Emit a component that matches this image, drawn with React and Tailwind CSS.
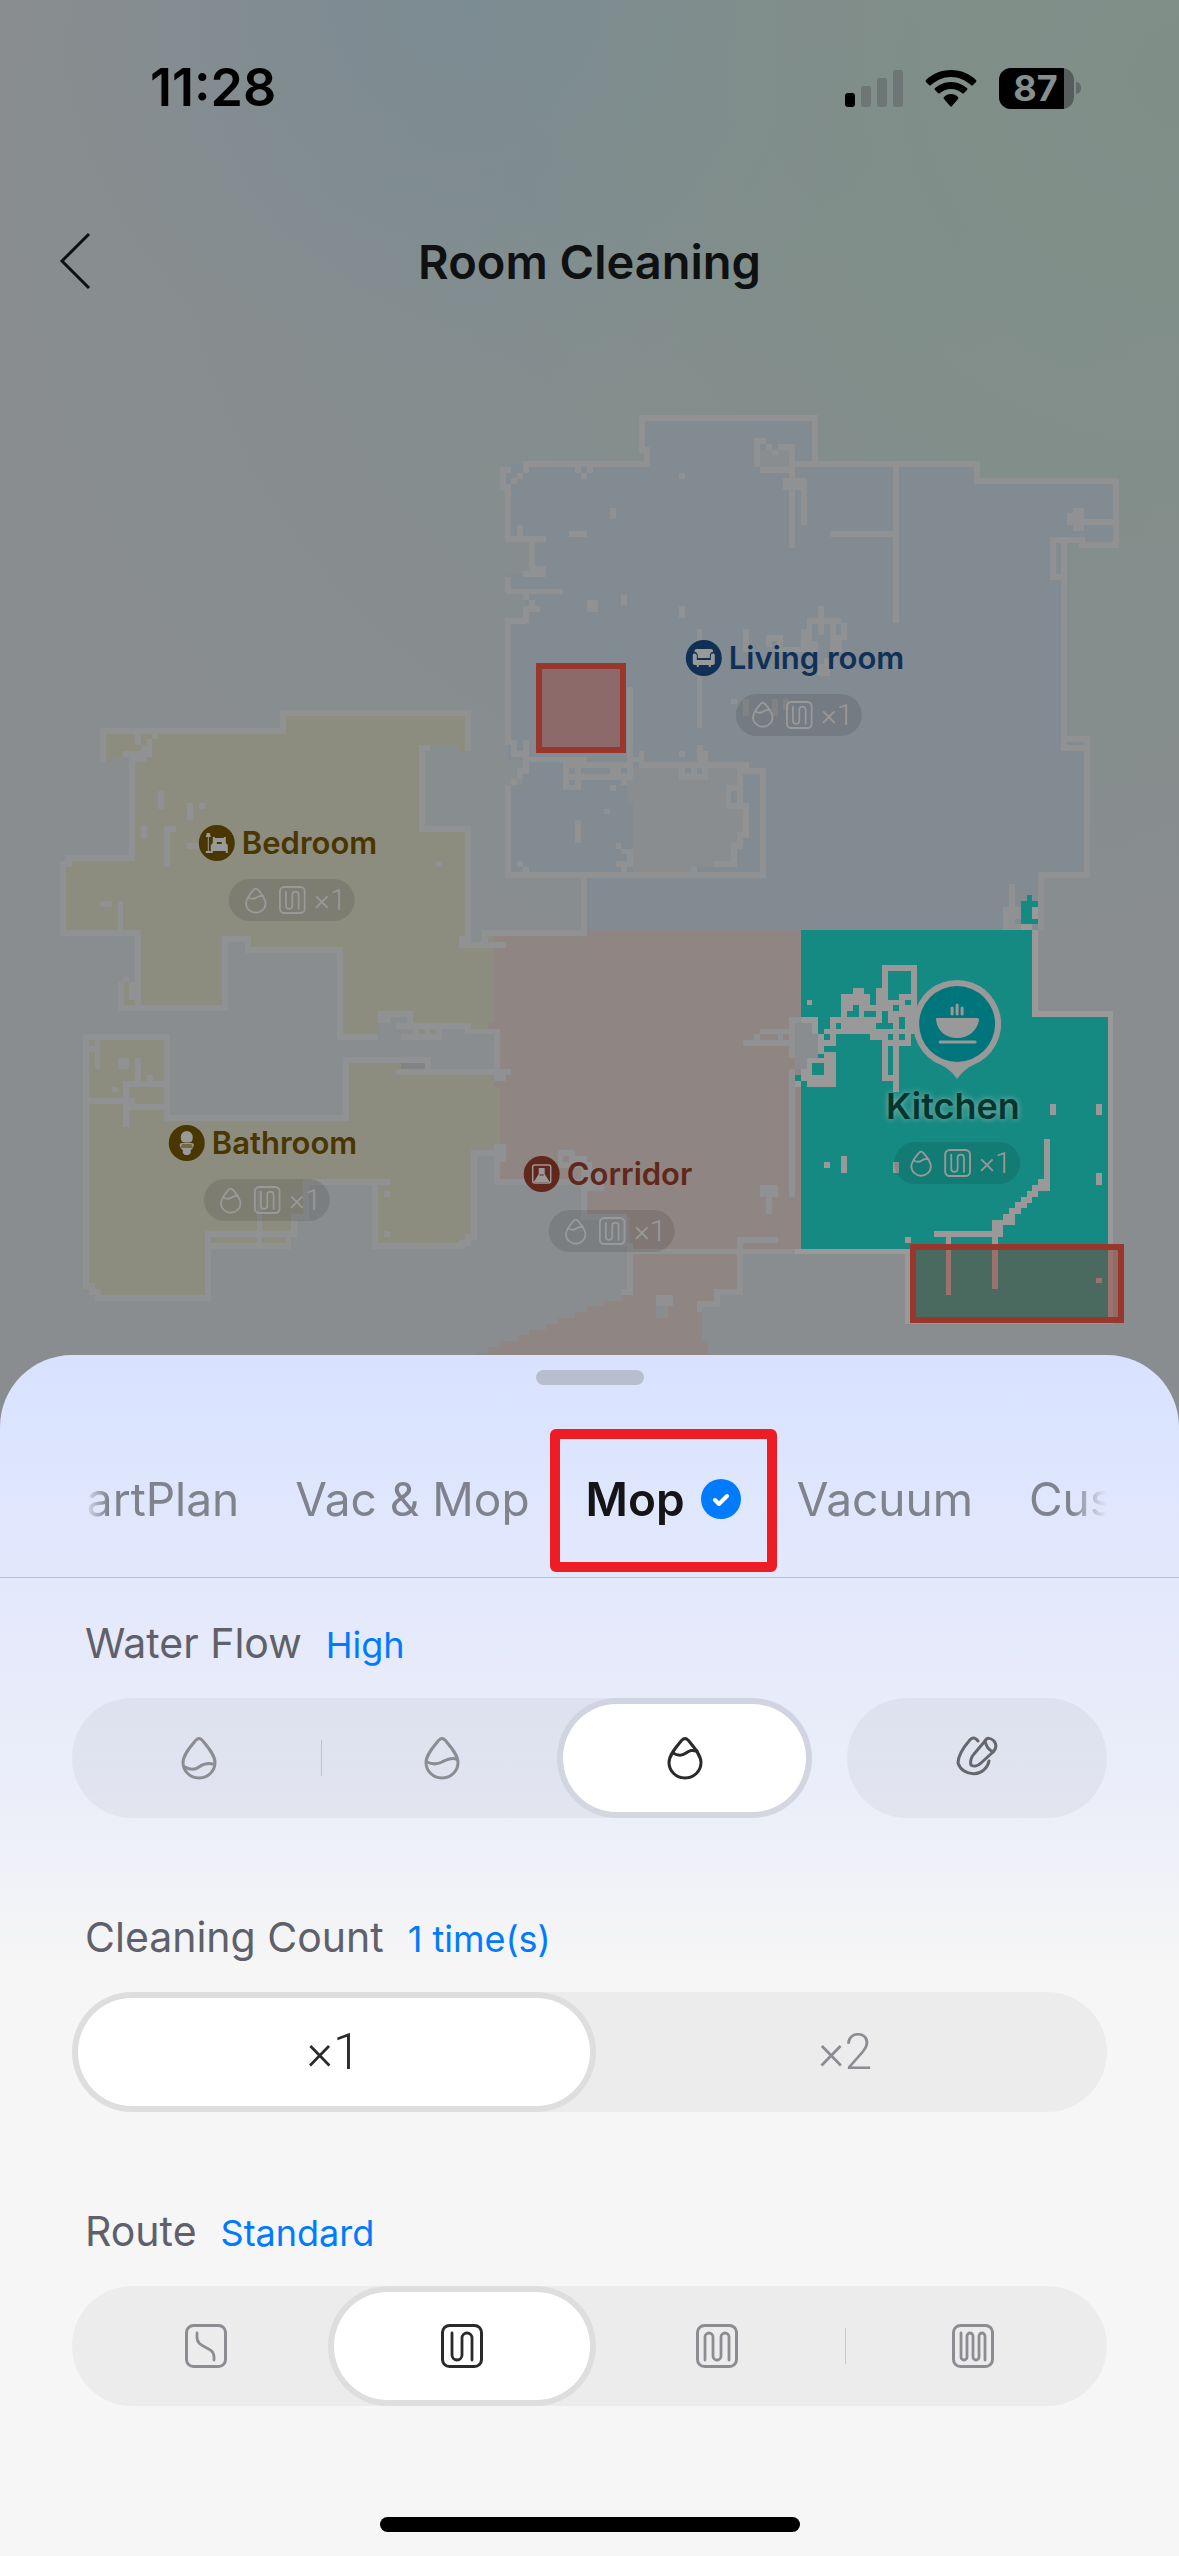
import { useState } from 'react';
import clsx from 'clsx';

const MAP = { top: 320, width: 1179, height: 1115 };

const COLORS = {
  wall: '#8f9193',
  void: '#898d8f',
  blue: '#828a92',
  yellow: '#8c8c7f',
  pink: '#8f8583',
  teal: '#148a82',
  light: '#999999',
};

// every block is [x, y, width, height] in map units
const livingWalls = [
  [575, 467, 6, 6], [581, 473, 6, 6], [587, 467, 6, 6], [679, 473, 6, 6], [610, 508, 6, 11],
  [569, 531, 18, 6], [517, 525, 6, 12], [500, 467, 11, 23], [511, 478, 6, 6], [517, 473, 6, 6],
  [523, 467, 6, 6], [506, 536, 40, 6], [529, 542, 6, 26], [523, 571, 23, 6], [529, 566, 17, 6],
  [506, 589, 57, 5], [523, 594, 6, 6], [529, 600, 6, 6], [529, 606, 11, 6], [523, 606, 6, 17],
  [587, 600, 11, 12], [621, 594, 6, 12], [679, 606, 6, 12], [697, 629, 5, 99], [743, 629, 6, 23],
  [766, 635, 17, 6], [766, 635, 6, 12], [777, 635, 6, 12], [777, 647, 30, 5], [818, 606, 6, 29],
  [807, 618, 34, 6], [807, 618, 5, 34], [801, 629, 6, 23], [830, 623, 6, 29], [841, 623, 6, 17],
  [836, 635, 6, 17], [812, 641, 6, 11], [824, 658, 6, 6], [818, 664, 12, 12], [731, 699, 6, 5],
  [743, 699, 6, 17], [772, 699, 6, 17], [783, 699, 6, 11], [679, 751, 6, 6], [697, 745, 6, 17],
  [703, 751, 5, 11], [639, 751, 5, 17], [627, 687, 6, 92], [563, 762, 18, 28], [581, 774, 51, 6],
  [610, 768, 11, 6], [621, 779, 6, 6], [610, 785, 6, 6], [604, 809, 6, 5], [575, 820, 6, 23],
  [616, 843, 5, 6], [621, 849, 12, 5], [627, 854, 6, 13], [616, 861, 11, 6], [621, 867, 6, 6],
  [517, 861, 6, 6], [523, 867, 6, 6], [529, 757, 58, 5], [633, 757, 6, 5], [511, 740, 6, 17],
  [523, 740, 6, 34], [517, 751, 6, 6], [517, 768, 6, 11], [511, 779, 6, 6], [563, 762, 64, 6],
  [644, 762, 105, 6], [743, 768, 23, 6], [760, 768, 6, 107], [506, 872, 260, 6],
  [754, 438, 12, 6], [754, 444, 6, 23], [766, 444, 6, 6], [772, 450, 6, 5], [778, 444, 17, 6],
  [789, 450, 6, 11], [760, 467, 35, 6], [789, 461, 30, 6], [789, 467, 6, 81], [783, 478, 24, 12],
  [801, 490, 6, 35], [893, 467, 6, 156], [830, 531, 63, 6], [1073, 508, 11, 23], [1067, 513, 6, 12],
  [1084, 519, 30, 6], [1061, 542, 6, 38], [1061, 736, 6, 14], [1061, 745, 26, 6],
  [1009, 884, 6, 23], [1003, 907, 18, 23],
];

const loungeWalls = [
  [679, 768, 29, 12], [737, 768, 6, 41], [726, 785, 5, 24], [726, 785, 11, 6], [726, 803, 23, 6],
  [743, 803, 6, 35], [737, 832, 6, 17], [731, 843, 6, 24], [714, 861, 17, 6], [691, 867, 6, 6],
];

const livingHoles = [
  [506, 473, 5, 11], [569, 768, 6, 6], [569, 780, 6, 5], [685, 768, 6, 6], [697, 768, 5, 6],
  [731, 791, 6, 12], [697, 867, 23, 5], [1015, 919, 6, 5],
];

const bedroomWalls = [
  [135, 733, 6, 12], [141, 745, 11, 6], [147, 739, 5, 18], [152, 733, 6, 6], [123, 751, 29, 6],
  [129, 757, 18, 5], [158, 791, 6, 18], [187, 803, 6, 17], [199, 803, 6, 6], [141, 826, 6, 12],
  [164, 826, 6, 41], [170, 826, 6, 6], [187, 843, 13, 6], [436, 861, 6, 6], [100, 901, 12, 6],
  [118, 901, 5, 29], [129, 982, 6, 18], [123, 977, 6, 5], [482, 930, 6, 12], [459, 936, 6, 12],
  [459, 942, 47, 6], [482, 930, 105, 6], [396, 1023, 75, 6], [465, 1029, 35, 5], [494, 1029, 6, 40],
  [378, 1011, 35, 6], [378, 1017, 12, 6], [407, 1017, 6, 6], [401, 1034, 41, 6], [413, 1029, 29, 5],
];

const bathroomWalls = [
  [396, 1069, 115, 6], [494, 1075, 12, 6], [425, 1058, 5, 12], [494, 1144, 12, 18], [95, 1040, 5, 29],
  [89, 1046, 6, 6], [118, 1058, 11, 11], [135, 1058, 6, 23], [147, 1075, 6, 6], [123, 1081, 41, 6],
  [112, 1087, 6, 5], [123, 1087, 6, 40], [89, 1098, 46, 6], [129, 1104, 35, 6], [384, 1191, 6, 6],
  [384, 1231, 6, 6], [205, 1231, 92, 6], [210, 1243, 81, 6], [286, 1237, 5, 6], [257, 1190, 5, 53],
];

const corridorWalls = [
  [494, 1162, 6, 20], [494, 1179, 110, 6], [558, 1150, 17, 6], [558, 1156, 5, 12], [569, 1156, 18, 6],
  [563, 1162, 29, 6], [581, 1168, 23, 23], [581, 1191, 6, 26], [581, 1214, 46, 6], [621, 1220, 6, 26],
  [627, 1243, 6, 52], [621, 1289, 6, 6], [627, 1249, 168, 5], [737, 1237, 41, 6], [737, 1237, 6, 58],
  [714, 1289, 29, 6], [714, 1289, 6, 15], [697, 1301, 23, 6], [697, 1301, 5, 11], [760, 1185, 18, 12],
  [766, 1197, 6, 17], [789, 1069, 6, 128], [789, 1017, 12, 6], [789, 1023, 6, 35], [760, 1029, 29, 5],
  [754, 1034, 6, 6], [743, 1040, 46, 6], [778, 1034, 5, 6], [656, 1295, 17, 11],
];

const kitchenWalls = [
  [1032, 930, 6, 87], [1032, 1011, 81, 6], [1108, 1017, 5, 306], [905, 1321, 208, 3],
  [905, 1249, 5, 74], [795, 1249, 115, 5], [807, 1000, 5, 5], [882, 965, 35, 6], [882, 971, 6, 109],
  [911, 971, 6, 63], [899, 994, 12, 6], [876, 988, 6, 52], [888, 1000, 23, 46], [893, 1046, 6, 46],
  [882, 1075, 17, 6], [853, 988, 11, 6], [841, 994, 29, 11], [841, 1005, 35, 29], [870, 1029, 12, 11],
  [830, 1017, 11, 17], [824, 1029, 12, 17], [801, 1017, 17, 6], [812, 1023, 6, 11],
  [818, 1034, 6, 20], [807, 1058, 29, 29], [824, 1052, 12, 6], [801, 1069, 6, 12], [795, 1081, 6, 6],
  [824, 1162, 6, 6], [841, 1156, 6, 17], [893, 1162, 6, 11], [1050, 1104, 6, 11],
  [1096, 1104, 6, 11], [1096, 1173, 6, 12], [1044, 1139, 6, 52], [1038, 1179, 6, 12],
  [1032, 1185, 6, 12], [1027, 1191, 5, 12], [1021, 1197, 6, 11], [1015, 1202, 6, 12],
  [1009, 1208, 6, 17], [1003, 1214, 6, 11], [992, 1220, 11, 17], [934, 1231, 58, 6],
  [946, 1237, 5, 58], [992, 1237, 6, 52], [905, 1237, 6, 6], [1096, 1278, 6, 5],
  [1032, 907, 6, 12], [1021, 924, 11, 6],
];

const kitchenHoles = [
  [893, 1005, 6, 6], [905, 1000, 6, 5], [899, 1017, 6, 12], [876, 1023, 17, 6], [882, 1011, 6, 12],
  [888, 1034, 5, 6], [899, 1034, 6, 6], [888, 1046, 5, 29], [853, 1005, 6, 12], [847, 1011, 6, 6],
  [864, 1011, 12, 6], [836, 1023, 5, 6], [824, 1034, 6, 6], [812, 1063, 12, 12],
  [795, 1075, 6, 6], [824, 1046, 12, 6], [1027, 895, 5, 6], [1021, 901, 17, 6], [1021, 907, 11, 17],
  [1032, 919, 6, 5],
];

const rooms = [
  { name: 'Living room', x: 799, y: 640, tone: 'bg-[#103056]', text: 'text-[#103056]', icon: 'sofa' },
  { name: 'Bedroom', x: 292, y: 825, tone: 'bg-[#4a3600]', text: 'text-[#4a3600]', icon: 'bed' },
  { name: 'Bathroom', x: 267, y: 1125, tone: 'bg-[#4a3600]', text: 'text-[#4a3600]', icon: 'toilet' },
  { name: 'Corridor', x: 612, y: 1156, tone: 'bg-[#61271b]', text: 'text-[#61271b]', icon: 'door' },
];

const tabs = ['SmartPlan', 'Vac & Mop', 'Mop', 'Vacuum', 'Customize'];

const waterLevels = {
  Low: 'M4 31C9 34 14 34 18 31S27 27 32 28',
  Medium: 'M3 26C9 29 14 28 18 26S27 21 32 23',
  High: 'M6 17C11 20 15 20 19 17S25 14 30 15',
};

const routePaths = {
  Quick: 'M12 9v4c0 6 4 8 8 10s9 4 9 10v3',
  Standard: 'M11 9V31a5 5 0 0 0 10 0V14a5 5 0 0 1 10 0V36',
  Deep: 'M9 36V13a4 4 0 0 1 8 0V32a4 4 0 0 0 8 0V13a4 4 0 0 1 8 0V36',
  'Deep+': 'M9 9V33a3 3 0 0 0 6 0V12a3 3 0 0 1 6 0V33a3 3 0 0 0 6 0V12a3 3 0 0 1 6 0V36',
};

function DropIcon({ level = 'High', className }) {
  return (
    <svg viewBox="0 0 36 44" className={className} fill="none" stroke="currentColor" strokeWidth="3" strokeLinecap="round">
      <path d="M18 2.500C19.500 2.500 20.500 3.500 21.500 4.500C27 11 34 19 34 26.500A16 15.500 0 0 1 2 26.500C2 19 9 11 14.500 4.500C15.500 3.500 16.500 2.500 18 2.500Z" />
      <path d={waterLevels[level]} />
    </svg>
  );
}

function RouteIcon({ route = 'Standard', className }) {
  return (
    <svg viewBox="0 0 42 44" className={className} fill="none" stroke="currentColor" strokeWidth="3" strokeLinecap="round">
      <rect x="1.500" y="1.500" width="39" height="41" rx="7" />
      <path d={routePaths[route]} strokeWidth="2.800" />
    </svg>
  );
}

function CustomDropIcon() {
  return (
    <svg viewBox="0 0 44 44" className="size-11" fill="none" stroke="currentColor" strokeWidth="3" strokeLinecap="round" strokeLinejoin="round">
      <path d="M23 5C20 1 17 1 14 5C8 12 3 19 3 27A16 15.500 0 0 0 34 25" />
      <path d="M30 5C32 1 36 2 39 5C42 9 41 13 38 16L26 27C23 30 19 31 16 29C15 26 16 21 19 18Z" />
      <path d="M30 5C31 10 34 14 38 16" />
    </svg>
  );
}

function RoomGlyph({ name }) {
  return (
    <svg viewBox="0 0 36 36" className="size-9" fill="#999" stroke="none">
      {name === 'sofa' && (
        <>
          <path d="M11 9H25C27 9 28 11 27 12C25 12 24 14 24 16V18H12V16C12 14 11 12 9 12C8 11 9 9 11 9Z" />
          <path d="M7 15C7 13 11 13 11 16V20H25V16C25 13 29 13 29 15V23C29 24 28 25 27 25H25V27H23V25H13V27H11V25H9C8 25 7 24 7 23Z" />
        </>
      )}
      {name === 'bed' && (
        <>
          <path d="M8 8H11L12 12H10V26H12V28H7V26H9V12H7Z" />
          <path d="M14 12H16V13H25V12H27V18L29 20V28H27V26H14V28H12V20L14 18Z" />
          <path d="M18 17H23V19H18Z" fill="#4a3600" />
        </>
      )}
      {name === 'toilet' && (
        <>
          <path d="M12 12A6 6 0 0 1 24 12C24 15 23 17 22 17H14C13 17 12 15 12 12Z" />
          <path d="M11 19C13 17 23 17 25 19V21C24 24 22 25 22 25V28L20 30H16L14 28V25C14 25 12 24 11 21Z" />
          <path d="M13 20H23M12 22H24" stroke="#4a3600" strokeWidth="1" />
        </>
      )}
      {name === 'door' && (
        <>
          <rect x="9" y="9" width="18" height="18" rx="2" fill="none" stroke="#999" strokeWidth="1.500" />
          <path d="M15 12H21V18L26 26H10L15 18Z" />
          <path d="M16 19H20" stroke="#61271b" strokeWidth="1" />
        </>
      )}
    </svg>
  );
}

function Times({ count, className }) {
  return <span className={clsx('font-[Roboto,sans-serif] leading-none font-light', className)}>×{count}</span>;
}

function ModeChip() {
  return (
    <div className="flex h-[42px] w-[126px] items-center gap-3 rounded-full bg-black/10 pl-4 text-[#999]">
      <DropIcon className="h-[27px] w-[22px]" />
      <RouteIcon className="h-7 w-[27px]" />
      <Times count={1} className="-ml-1 text-[30px]" />
    </div>
  );
}

function Blocks({ items, fill }) {
  return items.map(([x, y, w, h]) => <rect key={`${x}-${y}-${w}-${h}`} x={x} y={y} width={w} height={h} fill={fill} />);
}

function FloorPlan() {
  const outline = { fill: 'none', stroke: COLORS.wall, strokeWidth: 6 };
  return (
    <svg viewBox="0 320 1179 1115" className="block w-full" shapeRendering="crispEdges" aria-hidden="true">
      {/* Living room */}
      <path
        fill={COLORS.blue}
        d="M642 418H815V464H977V481H1116V545H1082V540H1064V736H1087V875H1041V930H587V875H508V785H523V760H508V621H526V594H508V574H532V540H508V464H647V453H642Z"
      />
      <path
        {...outline}
        d="M584 930V875M508 878V785M508 745V621H526M508 592V577M508 540V473M523 464H647V450H642V415M639 418H815V464M789 464H977V481H1116V545H1082V540H1053V577H1064M1064 540V739H1087V875H1041V930"
      />
      <path fill={COLORS.void} d="M627 779H633V768H743V832H737V849H731V867H697V872H633V803H627Z" />
      <path fill={COLORS.void} d="M760 450H789V467H760Z" />
      <Blocks items={livingWalls} fill={COLORS.wall} />
      <Blocks items={loungeWalls} fill={COLORS.wall} />
      <Blocks items={livingHoles} fill={COLORS.blue} />

      {/* Bedroom */}
      <path
        fill={COLORS.yellow}
        d="M103 731H283V713H468V751H459V745H422V829H468V945H494V1023H488V1029H378V1037H340V950H248V939H225V1008H121V982H138V933H63V861H132V757H112V762H103Z"
      />
      <path {...outline} d="M103 762V731H283V713H468V751M430 748H422V829H468V942M132 757V858H69V864H63V933H138V1008M228 1008H121V982M225 1011V939H248V950H340V1037H378" />
      <path fill={COLORS.void} d="M390 1017H407V1023H396V1034H401V1058H378V1023H390Z" />

      {/* Corridor */}
      <path
        fill={COLORS.pink}
        d="M494 936H587V930H801V1251H740V1292H717V1304H702V1341H708V1361H477V1353H488V1347H500V1341H517V1335H529V1330H546V1324H558V1318H575V1312H587V1306H604V1301H621V1295H630V1217H584V1182H497V1144H500V1087H494V1075H500V1029H488V1023H494Z"
      />
      <path fill={COLORS.void} d="M795 1023H818V1058H806V1069H795Z" />
      <rect x="656" y="1306" width="12" height="12" fill={COLORS.void} />
      <Blocks items={bedroomWalls} fill={COLORS.wall} />
      <Blocks items={[[488, 936, 6, 6], [419, 1029, 6, 5], [430, 1029, 6, 5]]} fill={COLORS.yellow} />
      <Blocks items={corridorWalls} fill={COLORS.wall} />

      {/* Bathroom */}
      <path
        fill={COLORS.yellow}
        d="M86 1037H167V1118H346V1060H401V1075H494V1087H500V1150H474V1237H462V1246H375V1182H306V1217H294V1246H208V1298H98V1292H86Z"
      />
      <path {...outline} d="M494 1153H474V1237H468V1243H462V1246H375V1182M390 1182H306V1217H294V1237M208 1231V1298H98V1292H92V1286H86V1037H167V1118H346V1060H428V1070" />
      <rect x="401" y="1063" width="24" height="6" fill="#818385" />
      <Blocks items={bathroomWalls} fill={COLORS.wall} />

      {/* Kitchen */}
      <path fill={COLORS.teal} d="M801 930H1032V1017H1108V1321H910V1249H801Z" />
      <path fill={COLORS.void} d="M801 1023H812V1034H818V1058H807V1069H801Z" />
      <Blocks items={kitchenWalls} fill={COLORS.light} />
      <Blocks items={kitchenHoles} fill={COLORS.teal} />

      {/* No-go zones */}
      <g fill="#9a3a2d" fillOpacity="0.4" stroke="#9a372d" strokeWidth="6">
        <rect x="539" y="666" width="84" height="84" />
        <rect x="913" y="1247" width="208" height="73" />
      </g>
    </svg>
  );
}

function MapPin({ x, y, children }) {
  const style = {
    left: `${(x / MAP.width) * 100}%`,
    top: `${((y - MAP.top) / MAP.height) * 100}%`,
  };
  return (
    <div className="absolute flex -translate-x-1/2 flex-col items-center" style={style}>
      {children}
    </div>
  );
}

function CleaningMap() {
  return (
    <div className="relative">
      <FloorPlan />
      {rooms.map((room) => (
        <MapPin key={room.name} x={room.x} y={room.y}>
          <div className="mb-[18px] flex h-9 items-center gap-[7px] pr-2">
            <span className={clsx('rounded-full', room.tone)}>
              <RoomGlyph name={room.icon} />
            </span>
            <span className={clsx('whitespace-nowrap text-[31px] leading-9 font-semibold', room.text)}>{room.name}</span>
          </div>
          <ModeChip />
        </MapPin>
      ))}
      <MapPin x={957} y={980}>
        <svg viewBox="0 0 88 100" className="h-[100px] w-[88px]">
          <path d="M44 0A44 44 0 0 1 60 85C54 88 50 91 44 99C38 91 34 88 28 85A44 44 0 0 1 44 0Z" fill="#999" />
          <circle cx="44" cy="44" r="38" fill="#00767c" />
          <path d="M24 38H64Q66 38 66 40C64 51 55 58 44 58S24 51 23 40Q22 38 24 38Z" fill="#999" />
          <path d="M39 28V34M44 25V34M49 28V34M27 62H62" stroke="#999" strokeWidth="3" strokeLinecap="round" />
        </svg>
        <span className="mt-[3px] mb-[13px] pr-2 text-4xl leading-[46px] font-semibold text-[#05352f] [text-shadow:0_0_6px_#8fb5b0]">Kitchen</span>
        <ModeChip />
      </MapPin>
    </div>
  );
}

function StatusBar() {
  return (
    <div className="flex h-[176px] items-center justify-between pr-[98px] pl-[150px] text-black">
      <span className="text-[52px] leading-none font-semibold">11:28</span>
      <div className="flex items-center gap-[22px]">
        <svg viewBox="0 0 58 38" className="h-[38px] w-[58px]">
          <rect x="0" y="24" width="10" height="14" rx="3" />
          <g fill="#6d7675">
            <rect x="16" y="17" width="10" height="21" rx="3" />
            <rect x="32" y="9" width="10" height="29" rx="3" />
            <rect x="48" y="1" width="10" height="37" rx="3" />
          </g>
        </svg>
        <svg viewBox="0 0 52 38" className="h-[38px] w-[52px]">
          <path d="M26 1C36 1 45 5 51 11Q52 12 51 13L48 16Q47 17 46 16C40 11 34 8 26 8S12 11 6 16Q5 17 4 16L1 13Q0 12 1 11C7 5 16 1 26 1Z" />
          <path d="M26 13C33 13 38 16 42 19Q43 20 42 21L39 24Q38 25 37 24C34 22 31 20 26 20S18 22 15 24Q14 25 13 24L10 21Q9 20 10 19C14 16 19 13 26 13Z" />
          <path d="M26 25C29 25 31 26 33 28Q34 29 33 30L27 37Q26 38 25 37L19 30Q18 29 19 28C21 26 23 25 26 25Z" />
        </svg>
        <div className="flex items-center gap-[2px]">
          <div className="flex h-[41px] w-[75px] items-center overflow-hidden rounded-xl bg-[#565d5c]">
            <span className="flex h-full w-[65px] items-center justify-center bg-black pl-2 text-4xl leading-none font-bold text-[#858f8d]">87</span>
          </div>
          <span className="h-3 w-[5px] rounded-r-full bg-[#626a68]" />
        </div>
      </div>
    </div>
  );
}

function Header() {
  return (
    <header className="grid h-[144px] grid-cols-[120px_1fr_120px] items-start">
      <button type="button" aria-label="Back" className="ml-[58px] pt-[55px]">
        <svg viewBox="0 0 34 60" className="h-[60px] w-[34px]" fill="none" stroke="#0e1011" strokeWidth="3">
          <path d="M31 3L4 30L31 57" />
        </svg>
      </button>
      <h1 className="pt-[56px] text-center text-[47px] leading-[60px] font-semibold text-[#0e1011]">Room Cleaning</h1>
    </header>
  );
}

function Setting({ title, value, children }) {
  return (
    <section>
      <div className="flex h-14 items-baseline gap-6 pl-[13px]">
        <h2 className="text-[41px] leading-[58px] text-[#5f6069]">{title}</h2>
        <span className="text-4xl leading-[58px] text-[#007bff]">{value}</span>
      </div>
      <div className="mt-7 flex gap-[35px]">{children}</div>
    </section>
  );
}

function Segmented({ name, options, value, onChange, render }) {
  const active = options.indexOf(value);
  return (
    <div role="radiogroup" aria-label={name} className="flex h-[120px] flex-1 rounded-full bg-black/4 p-[6px]">
      {options.map((option, i) => (
        <label
          key={option}
          aria-label={option}
          className={clsx(
            'relative flex flex-1 cursor-pointer items-center justify-center rounded-full',
            i === active ? 'bg-white text-[#2a2a2c] ring-6 ring-black/6' : 'text-[#8c8d93]'
          )}
        >
          <input type="radio" name={name} value={option} checked={i === active} onChange={() => onChange(option)} className="sr-only" />
          {i > 0 && i !== active && i - 1 !== active && <span className="absolute left-0 h-9 w-px bg-black/15" />}
          {render(option)}
        </label>
      ))}
    </div>
  );
}

export default function App() {
  const [tab, setTab] = useState('Mop');
  const [water, setWater] = useState('High');
  const [count, setCount] = useState('1');
  const [route, setRoute] = useState('Standard');

  return (
    <div className="flex min-h-screen flex-col overflow-hidden bg-[#898d8f] bg-[radial-gradient(circle_at_100%_3%,#7f8f87_0%,#7f8f8700_30%),radial-gradient(circle_at_40%_0%,#7b8b94_0%,#7b8b9400_16%),radial-gradient(circle_at_70%_6%,#828d8e_0%,#828d8e00_32%)] font-[Inter,sans-serif]">
      <StatusBar />
      <Header />
      <CleaningMap />

      {/* Bottom sheet */}
      <main className="relative -mt-20 flex flex-1 flex-col rounded-t-[72px] bg-[#f6f6f6] bg-[linear-gradient(#d8e2ff_0px,#dee6fe_120px,#e4e9fb_250px,#ebeef9_440px,#f1f2f7_530px,#f6f6f6_620px)] pt-[15px] pb-6">
        <div className="mx-auto h-[15px] w-[108px] rounded-full bg-[#b7becd]" />

        <div className="mt-11 border-b border-[#b9c0d6] px-[72px] pb-[5px]">
          <div className="overflow-hidden [mask-image:linear-gradient(to_right,transparent_12px,black_36px,black_calc(100%-36px),transparent)]">
            <div className="-ml-[55px] flex h-[143px] gap-14">
              {tabs.map((name) => (
                <button
                  key={name}
                  type="button"
                  onClick={() => setTab(name)}
                  className={clsx(
                    'relative flex shrink-0 items-center gap-4 pb-1 text-[46px] leading-none whitespace-nowrap',
                    name === tab ? 'font-semibold text-[#151518]' : 'text-[#80838e]'
                  )}
                >
                  {name}
                  {name === tab && (
                    <>
                      <svg viewBox="0 0 40 40" className="size-10">
                        <circle cx="20" cy="20" r="20" fill="#007bff" />
                        <path d="M14 21L18 25L26 17" fill="none" stroke="white" strokeWidth="4" strokeLinecap="round" strokeLinejoin="round" />
                      </svg>
                      <span className="absolute -inset-x-9 inset-y-0 rounded-md border-10 border-[#ee1c25]" />
                    </>
                  )}
                </button>
              ))}
            </div>
          </div>
        </div>

        <div className="flex flex-col gap-[90px] px-[72px] pt-9">
          <Setting title="Water Flow" value={water}>
            <Segmented
              name="Water Flow"
              options={['Low', 'Medium', 'High']}
              value={water}
              onChange={setWater}
              render={(level) => <DropIcon level={level} className="h-11 w-9" />}
            />
            <button type="button" aria-label="Custom water flow" className="flex h-[120px] w-[260px] items-center justify-center rounded-full bg-black/4 text-[#66676d]">
              <CustomDropIcon />
            </button>
          </Setting>

          <Setting title="Cleaning Count" value={`${count} time(s)`}>
            <Segmented
              name="Cleaning Count"
              options={['1', '2']}
              value={count}
              onChange={setCount}
              render={(n) => <Times count={n} className="text-[50px]" />}
            />
          </Setting>

          <Setting title="Route" value={route}>
            <Segmented
              name="Route"
              options={['Quick', 'Standard', 'Deep', 'Deep+']}
              value={route}
              onChange={setRoute}
              render={(r) => <RouteIcon route={r} className="h-11 w-[42px]" />}
            />
          </Setting>
        </div>

        <div className="mx-auto mt-auto h-[15px] w-[420px] rounded-full bg-black" />
      </main>
    </div>
  );
}
